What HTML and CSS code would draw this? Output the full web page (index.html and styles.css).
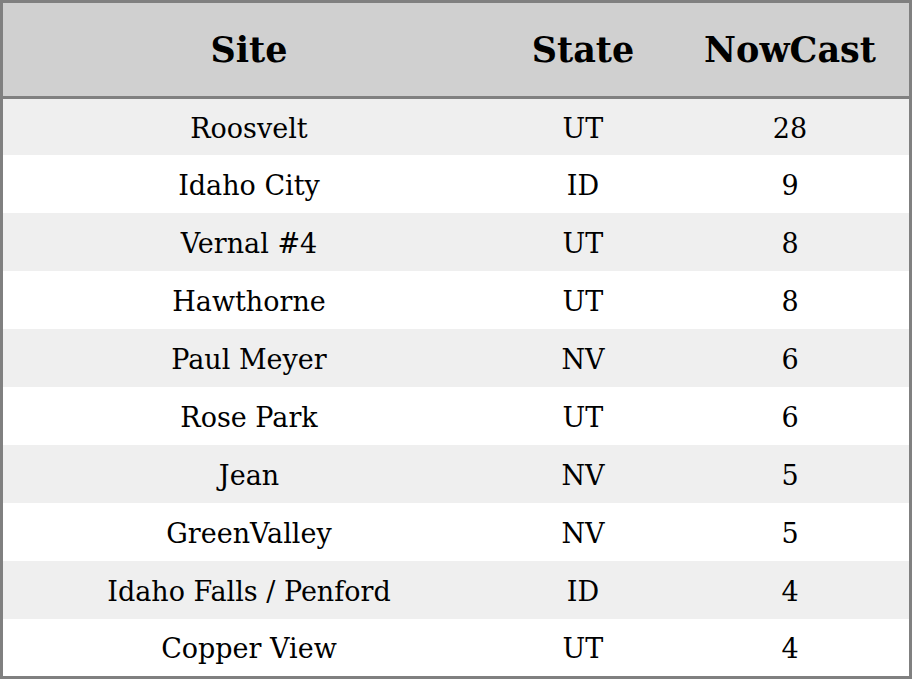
FILE: index.html
```html
<!DOCTYPE html>
<html>
<head>
<meta charset="utf-8">
<link rel="stylesheet" href="styles.css">
</head>
<body>
<table class="aq">
  <colgroup>
    <col class="c-site">
    <col class="c-state">
    <col class="c-now">
  </colgroup>
  <thead>
    <tr><th>Site</th><th>State</th><th>NowCast</th></tr>
  </thead>
  <tbody>
    <tr><td>Roosvelt</td><td>UT</td><td>28</td></tr>
    <tr><td>Idaho City</td><td>ID</td><td>9</td></tr>
    <tr><td>Vernal #4</td><td>UT</td><td>8</td></tr>
    <tr><td>Hawthorne</td><td>UT</td><td>8</td></tr>
    <tr><td>Paul Meyer</td><td>NV</td><td>6</td></tr>
    <tr><td>Rose Park</td><td>UT</td><td>6</td></tr>
    <tr><td>Jean</td><td>NV</td><td>5</td></tr>
    <tr><td>GreenValley</td><td>NV</td><td>5</td></tr>
    <tr><td>Idaho Falls / Penford</td><td>ID</td><td>4</td></tr>
    <tr><td>Copper View</td><td>UT</td><td>4</td></tr>
  </tbody>
</table>
</body>
</html>
```

FILE: styles.css
```css
html, body {
  margin: 0;
  padding: 0;
  background: #ffffff;
}
.aq {
  width: 912px;
  height: 679px;
  border-collapse: separate;
  border-spacing: 0;
  border: 3px solid #808080;
  box-sizing: border-box;
  table-layout: fixed;
  font-family: "DejaVu Serif", serif;
  color: #000;
}
.c-site { width: 492px; }
.c-state { width: 176px; }
.c-now { width: 238px; }
.aq th {
  background: #d0d0d0;
  height: 93px;
  padding: 0;
  font-size: 35px;
  font-weight: bold;
  text-align: center;
  border-bottom: 3px solid #808080;
}
.aq td {
  box-sizing: border-box;
  height: 58px;
  padding: 2px 0 0;
  font-size: 27px;
  text-align: center;
}
.aq tbody tr:first-child td { height: 56px; }
.aq tbody tr:last-child td { height: 57px; }
.aq tbody tr:nth-child(odd) td { background: #efefef; }
.aq tbody tr:nth-child(even) td { background: #ffffff; }
```
